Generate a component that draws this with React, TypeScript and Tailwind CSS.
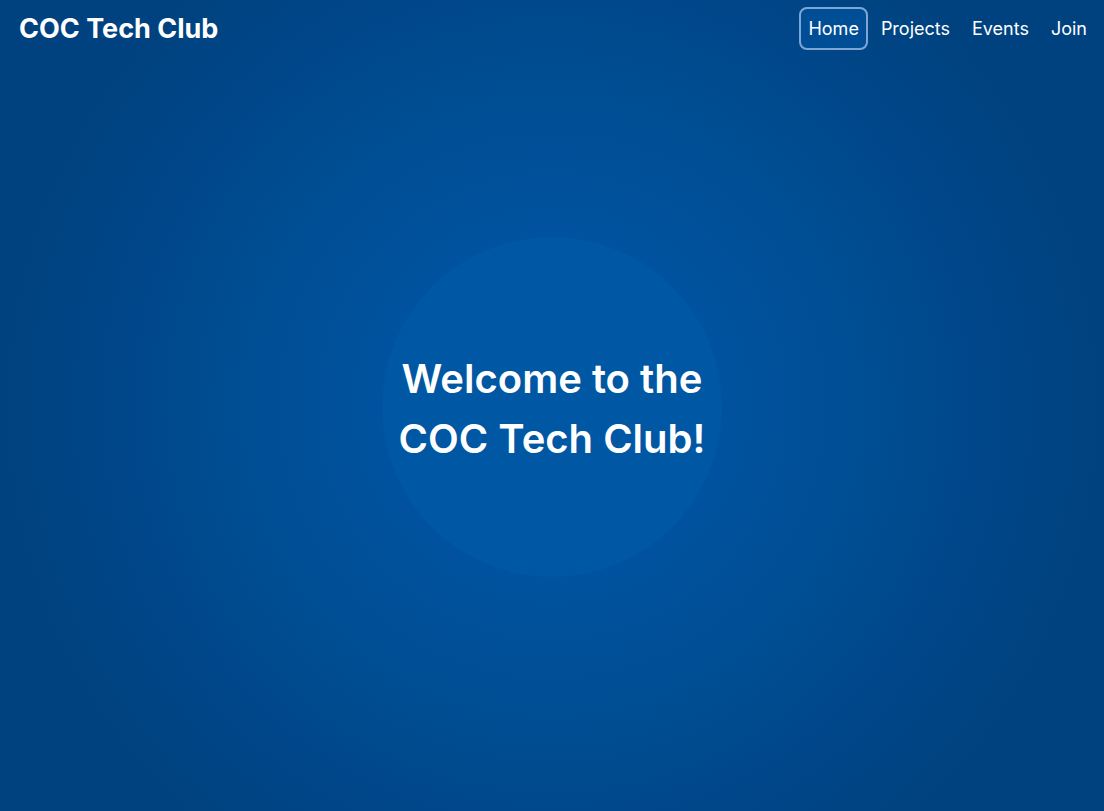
import React from "react";

const links = ["Home", "Projects", "Events", "Join"];

const App = () => {
  return (
    <div
      className="relative h-screen w-full overflow-hidden bg-[radial-gradient(circle_at_50%_50%,#0057a2_0%,#0053a0_22%,#004e94_45%,#00478a_62%,#00427f_80%)] text-white"
      style={{ fontFamily: "Inter, 'Noto Sans', sans-serif" }}
    >
      {/* NAVBAR */}
      <header className="absolute inset-x-0 top-0 flex items-center justify-between pl-[19px] pr-[8px] pt-[7px]">
        <h1 className="text-[27px] font-bold leading-[43px]">COC Tech Club</h1>
        <nav className="flex items-center gap-[4px]">
          {links.map((link, i) => (
            <a
              key={link}
              href="#"
              className={`rounded-lg border-2 px-[7px] py-[7px] text-[18px] leading-[25px] ${
                i === 0 ? "border-[#7ea6d4] bg-[#004f96]" : "border-transparent"
              }`}
            >
              {link}
            </a>
          ))}
        </nav>
      </header>

      {/* HERO */}
      <main className="flex h-full items-center justify-center pt-[2px]">
        <div className="flex h-[340px] w-[340px] items-center justify-center rounded-full bg-[#0057a3] pt-[4px]">
          <h2 className="text-center text-[40px] font-semibold leading-[60px]">
            Welcome to the
            <br />
            COC Tech Club!
          </h2>
        </div>
      </main>
    </div>
  );
};

export default App;
